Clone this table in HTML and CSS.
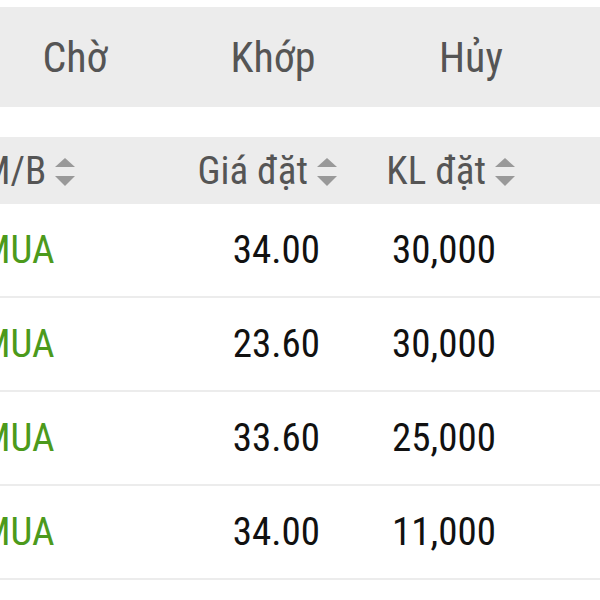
FILE: index.html
```html
<!DOCTYPE html>
<html lang="vi">
<head>
<meta charset="utf-8">
<link rel="stylesheet" href="styles.css">
</head>
<body>
<div class="page">
  <div class="tabs">
    <div class="tab">Chờ</div>
    <div class="tab">Khớp</div>
    <div class="tab">Hủy</div>
    <div class="tab"></div>
  </div>

  <div class="table">
    <div class="row head">
      <div class="cell c1"><span>M/B</span><svg class="sort" viewBox="0 0 20 28" width="20" height="28"><path d="M10 0 L20 9 L0 9 Z"/><path d="M0 18 L20 18 L10 28 Z"/></svg></div>
      <div class="cell c2"><span>Giá đặt</span><svg class="sort" viewBox="0 0 20 28" width="20" height="28"><path d="M10 0 L20 9 L0 9 Z"/><path d="M0 18 L20 18 L10 28 Z"/></svg></div>
      <div class="cell c3"><span>KL đặt</span><svg class="sort" viewBox="0 0 20 28" width="20" height="28"><path d="M10 0 L20 9 L0 9 Z"/><path d="M0 18 L20 18 L10 28 Z"/></svg></div>
      <div class="cell c4"></div>
    </div>
    <div class="row">
      <div class="cell c1 buy">MUA</div>
      <div class="cell c2 num">34.00</div>
      <div class="cell c3 num">30,000</div>
      <div class="cell c4"></div>
    </div>
    <div class="row">
      <div class="cell c1 buy">MUA</div>
      <div class="cell c2 num">23.60</div>
      <div class="cell c3 num">30,000</div>
      <div class="cell c4"></div>
    </div>
    <div class="row">
      <div class="cell c1 buy">MUA</div>
      <div class="cell c2 num">33.60</div>
      <div class="cell c3 num">25,000</div>
      <div class="cell c4"></div>
    </div>
    <div class="row">
      <div class="cell c1 buy">MUA</div>
      <div class="cell c2 num">34.00</div>
      <div class="cell c3 num">11,000</div>
      <div class="cell c4"></div>
    </div>
    <div class="row">
      <div class="cell c1"></div>
      <div class="cell c2"></div>
      <div class="cell c3"></div>
      <div class="cell c4"></div>
    </div>
  </div>
</div>
</body>
</html>
```
FILE: styles.css
```css
html, body {
  margin: 0;
  padding: 0;
  background: #ffffff;
  overflow: hidden;
}

.page {
  width: 660px;
  margin-left: -24px;
  padding-top: 7px;
  font-family: "Roboto Condensed", Roboto, sans-serif;
}

.tabs {
  display: flex;
  height: 100px;
  background: #ececec;
}

.tab {
  width: 198px;
  display: flex;
  align-items: center;
  justify-content: center;
  font-size: 42px;
  color: #555555;
}

.tab:last-child {
  flex: 1;
}

.table {
  margin-top: 30px;
}

.row {
  display: grid;
  grid-template-columns: 204px 160px 180px 1fr;
  height: 92px;
  border-bottom: 2px solid #ececec;
  font-size: 39px;
}

.row.head {
  height: 67px;
  border-bottom: 0;
  background: #ececec;
  font-size: 39px;
  color: #555555;
}

.cell {
  display: flex;
  align-items: center;
}

.c1 {
  padding-left: 5px;
}

.c2, .c3 {
  justify-content: flex-end;
}

.head .c2 { padding-right: 3px; }
.head .c3 { padding-right: 5px; }

.num {
  color: #111111;
}

.row .c2.num { padding-right: 20px; }
.row .c3.num { padding-right: 24px; }

.buy {
  color: #4c9a1c;
}

.sort {
  margin-left: 9px;
  margin-top: 2px;
  fill: #999999;
  flex: none;
}
```
